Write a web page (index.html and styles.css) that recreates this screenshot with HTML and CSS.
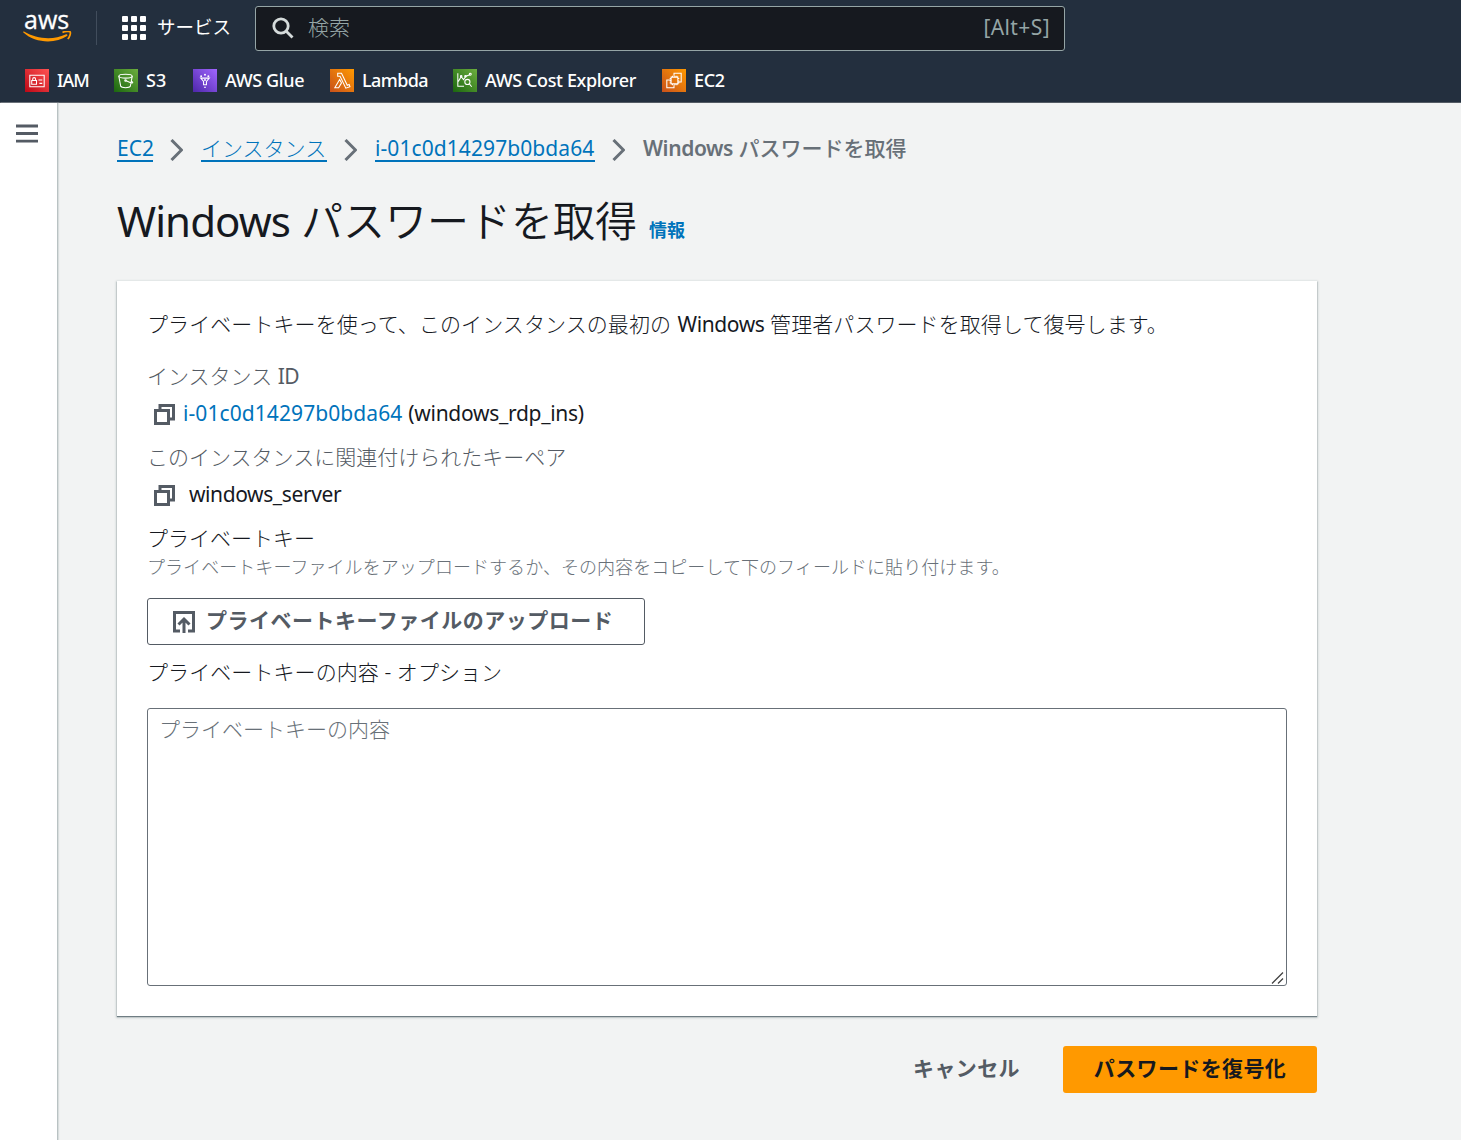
FILE: index.html
```html
<!DOCTYPE html>
<html lang="ja">
<head>
<meta charset="utf-8">
<title>Windows パスワードを取得</title>
<link rel="stylesheet" href="styles.css">
</head>
<body>
<header class="topnav">
  <div class="nav-main">
    <a class="logo" aria-label="aws"><span class="logo-text">aws</span>
      <svg class="smile" width="49" height="12" viewBox="0 0 49 12"><path d="M1 .5C14 8.500 31 9 42.500 3.500C44 2.700 45 4 44 5C33 13 12 12.500 .4 1.600C-.2 .8 .2 .2 1 .5Z" fill="#f90"/><path d="M39.500 1.400C42 .2 46.500 0 47.200 .9C47.800 2 47 5.500 44.800 8" fill="none" stroke="#f90" stroke-width="1.700"/></svg></a>
    <span class="divider"></span>
    <a class="services">
      <svg width="24" height="24" viewBox="0 0 24 24" fill="#fff"><rect width="6" height="6" rx="1"/><rect x="9" width="6" height="6" rx="1"/><rect x="18" width="6" height="6" rx="1"/><rect y="9" width="6" height="6" rx="1"/><rect x="9" y="9" width="6" height="6" rx="1"/><rect x="18" y="9" width="6" height="6" rx="1"/><rect y="18" width="6" height="6" rx="1"/><rect x="9" y="18" width="6" height="6" rx="1"/><rect x="18" y="18" width="6" height="6" rx="1"/></svg>
      <span>サービス</span></a>
    <div class="search">
      <svg width="22" height="22" viewBox="0 0 22 22" fill="none" stroke="#d5dbdb" stroke-width="2.800"><circle cx="9" cy="9" r="7.200"/><path d="M14 14L20.500 20.500"/></svg>
      <span class="search-label">検索</span><span class="shortcut">[Alt+S]</span>
    </div>
  </div>
  <nav class="favorites">
    <a class="fav iam"><svg class="tile red" viewBox="0 0 24 24"><path d="M4.500 6.500h15v12h-15zM6.500 12h5v4h-5zM7.500 12v-1.500a1.500 1.500 0 0 1 3 0V12M13.500 11.500h4M14.500 15h3"/></svg><span>IAM</span></a>
    <a class="fav s3"><svg class="tile green" viewBox="0 0 24 24"><ellipse cx="11.500" cy="7.500" rx="7" ry="2"/><path d="M4.500 7.500L6.500 18c1 2 9 2 10 0l2-10.500M11.500 12l6 2.500c2 .5 2-1 .5-1.500"/><circle cx="11.500" cy="12" r=".8"/></svg><span>S3</span></a>
    <a class="fav glue"><svg class="tile purple" viewBox="0 0 24 24"><path d="M7.500 9.500h9L13.500 13v3.500h-3V13zM11 19h2"/><g fill="#fff" stroke="none"><circle cx="8" cy="7.500" r="1"/><circle cx="12" cy="6" r="1"/><circle cx="15.500" cy="7.500" r="1"/><circle cx="12" cy="11.500" r="1"/></g></svg><span>AWS Glue</span></a>
    <a class="fav lambda"><svg class="tile orange" viewBox="0 0 24 24"><path d="M7.500 4.500h4l6 12.500 2-.8.8 2.300-4.300 1.500L10 7.500H7.500zM9.500 11l2 3.500-3 5H4.500z"/></svg><span>Lambda</span></a>
    <a class="fav cost"><svg class="tile green" viewBox="0 0 24 24"><path d="M4.500 4.500v13.500H11M5 13l3-5 2.500 3 2.500-3.500 4-1.500"/><circle cx="8" cy="7.500" r=".8"/><circle cx="12.500" cy="7.500" r=".8"/><circle cx="17.500" cy="5.500" r="1"/><circle cx="14.500" cy="13.500" r="2.700"/><path d="M16.500 15.500l2.500 3"/></svg><span>AWS Cost Explorer</span></a>
    <a class="fav ec2"><svg class="tile orange" viewBox="0 0 24 24"><path d="M12 7V4.500h7.500v9H17M9 11.500H4.500v8H12V17M9 8.500h7v7H9zM10.500 7v1.500M13 7v1.500M15 7v1.500M10.500 15.500V17M13 15.500V17M15 15.500V17M7.500 10H9M7.500 12.500H9M7.500 14.500H9M16 10h1.500M16 12.500h1.500M16 14.500h1.500"/></svg><span>EC2</span></a>
  </nav>
</header>
<div class="shell">
  <aside class="rail"><svg width="22" height="20" viewBox="0 0 22 20" stroke="#545b64" stroke-width="2.800"><path d="M0 2h22M0 9.500h22M0 17.200h22"/></svg></aside>
  <main class="content">
    <nav class="crumbs">
      <a class="crumb c1">EC2</a>
      <svg class="chev" viewBox="0 0 13 22"><path d="M1.500 1L11.500 11L1.500 21"/></svg>
      <a class="crumb c2">インスタンス</a>
      <svg class="chev" viewBox="0 0 13 22"><path d="M1.500 1L11.500 11L1.500 21"/></svg>
      <a class="crumb c3">i-01c0d14297b0bda64</a>
      <svg class="chev" viewBox="0 0 13 22"><path d="M1.500 1L11.500 11L1.500 21"/></svg>
      <span class="current"><span class="lat">Windows</span> パスワードを取得</span>
    </nav>
    <h1 class="title"><span class="lat">Windows</span> パスワードを取得<a class="info">情報</a></h1>
    <section class="panel">
      <p class="intro">プライベートキーを使って、このインスタンスの最初の <span class="lat">Windows</span> 管理者パスワードを取得して復号します。</p>
      <div class="label first">インスタンス <span class="lat">ID</span></div>
      <div class="value lat"><svg class="copy" viewBox="0 0 21 21"><path d="M1.500 6.500h13v13h-13zM6 6V1.500h13.500V15H15"/></svg><a class="link">i-01c0d14297b0bda64</a><span class="iname">(windows_rdp_ins)</span></div>
      <div class="label">このインスタンスに関連付けられたキーペア</div>
      <div class="value lat"><svg class="copy" viewBox="0 0 21 21"><path d="M1.500 6.500h13v13h-13zM6 6V1.500h13.500V15H15"/></svg><span class="keyname">windows_server</span></div>
      <div class="field">プライベートキー</div>
      <div class="hint">プライベートキーファイルをアップロードするか、その内容をコピーして下のフィールドに貼り付けます。</div>
      <button class="upload"><svg width="22" height="22" viewBox="0 0 22 22"><path d="M7 20H1.500V1.500h19V20H15M11 22V8M5.500 13.500L11 8l5.500 5.500"/></svg><span>プライベートキーファイルのアップロード</span></button>
      <div class="field option">プライベートキーの内容 - オプション</div>
      <div class="keywrap">
        <textarea class="keybox" placeholder="プライベートキーの内容"></textarea>
        <svg class="grip" width="14" height="14" viewBox="0 0 14 14"><path d="M1 12.500L12 1.500M7 12.500L12 7.500"/></svg>
      </div>
    </section>
    <div class="actions"><button class="cancel">キャンセル</button><button class="primary">パスワードを復号化</button></div>
  </main>
</div>
</body>
</html>
```
FILE: styles.css
```css
* { box-sizing: border-box; }
body { margin: 0; height: 1140px; overflow: hidden; background: #f2f3f3; color: #16191f; font: 300 21px/30px "Noto Sans", "Noto Sans CJK JP", sans-serif; }
button, textarea { font: inherit; margin: 0; }
.lat { font-weight: 400; }
svg { display: block; flex: none; }

.topnav { height: 103px; background: #232f3e; border-bottom: 1px solid #545b64; color: #fff; }
.nav-main { display: flex; align-items: center; height: 56px; }
.logo { width: 73px; padding-left: 23px; height: 56px; padding-top: 8px; }
.logo-text { display: block; height: 23px; margin-left: 1px; font: 500 25px/23px "Open Sans", sans-serif; letter-spacing: 0; -webkit-text-stroke: .3px #fff; }
.divider { width: 1px; height: 34px; margin-left: 23px; background: #414d5c; }
.services { display: flex; align-items: center; gap: 11px; margin-left: 25px; width: 133px; font-size: 18.500px; font-weight: 400; }
.services span { position: relative; top: -1px; }
.search { display: flex; align-items: center; width: 810px; height: 45px; padding: 0 14px 2px 16px; border: 1px solid #95a5a6; border-radius: 3px; background: #16191f; color: #95a5a6; }
.search svg { margin-top: 2px; }
.search-label { margin-left: 14px; }
.shortcut { margin-left: auto; font-weight: 400; letter-spacing: .4px; }
.favorites { display: flex; padding-left: 25px; height: 47px; align-items: center; font-size: 18px; font-weight: 500; }
.fav { display: flex; align-items: center; gap: 8px; white-space: nowrap; letter-spacing: -.38px; }
.iam { width: 89px; letter-spacing: -.9px; } .s3 { width: 79px; letter-spacing: 0; } .glue { width: 137px; } .lambda { width: 123px; letter-spacing: -.6px; } .cost { width: 209px; }
.tile { width: 24px; height: 23px; fill: none; stroke: #fff; stroke-width: 1.100; margin-top: 1px; }
.red { background: linear-gradient(45deg, #bd0816, #ff5252); }
.green { background: linear-gradient(45deg, #1b660f, #6cae3e); }
.purple { background: linear-gradient(45deg, #4d27aa, #a166ff); }
.orange { background: linear-gradient(45deg, #c8511b, #f90); }

.shell { display: flex; height: 1037px; }
.rail { width: 58px; padding: 21px 0 0 16px; background: #fff; border-right: 1px solid #b9c2c3; box-shadow: 1px 0 1px #d9dede; }
.content { padding: 31px 0 0 59px; width: 1259px; }
.crumbs { display: flex; align-items: center; height: 30px; }
.crumb { height: 25px; line-height: 23px; color: #0073bb; border-bottom: 2px solid #0073bb; font-weight: 400; white-space: nowrap; }
.c1 { width: 36px; } .c2 { width: 126px; font-weight: 300; } .c3 { width: 220px; letter-spacing: .08px; }
.chev { width: 13px; height: 22px; margin: 2px 18px 0 17px; fill: none; stroke: #687078; stroke-width: 3; }
.current { color: #687078; font-weight: 500; white-space: nowrap; position: relative; top: -1px; }
.current .lat { font-weight: 600; letter-spacing: -.4px; }
.title { margin: 27px 0 0; height: 60px; font-size: 42px; line-height: 60px; font-weight: 350; white-space: nowrap; }
.title .lat { letter-spacing: -.9px; }
.info { margin-left: 12px; font-size: 18px; font-weight: 700; color: #0073bb; }

.panel { height: 735px; margin: 30px 0 0; width: 1200px; padding: 28px 30px; background: #fff; box-shadow: 0 1px 1px #6f7d83, 0 1px 2px 1px #c8cfcf; }
.intro { margin: 0; white-space: nowrap; letter-spacing: .08px; }
.intro .lat { letter-spacing: -.4px; margin-left: 1px; }
.label { color: #545b64; margin-top: 14px; }
.first { margin-top: 22px; }
.first .lat { letter-spacing: -.5px; }
.value { display: flex; align-items: center; margin-top: 7px; }
.copy { width: 21px; height: 21px; margin: 2px 8px 0 7px; fill: none; stroke: #545b64; stroke-width: 3; }
.link { color: #0073bb; letter-spacing: .08px; }
.iname { margin-left: 6px; letter-spacing: -.3px; }
.keyname { margin-left: 6px; letter-spacing: -.4px; }
.field { margin-top: 14px; }
.hint { font-size: 18px; line-height: 28px; color: #687078; white-space: nowrap; letter-spacing: .06px; }
.upload { display: flex; align-items: center; width: 498px; height: 47px; margin-top: 17px; padding: 0 0 0 25px; gap: 11px; background: #fff; border: 1px solid #545b64; border-radius: 3px; color: #545b64; font-weight: 700; letter-spacing: .5px; white-space: nowrap; }
.upload svg { fill: none; stroke: #545b64; stroke-width: 3; margin-top: 1px; }
.upload span { position: relative; top: -2px; }
.option { margin-top: 12px; letter-spacing: .08px; }
.keywrap { position: relative; margin-top: 21px; }
.keybox { display: block; width: 1140px; height: 278px; padding: 5px 11px; border: 1px solid #687078; border-radius: 3px; background: #fff; resize: none; }
.keybox::placeholder { color: #687078; }
.grip { position: absolute; right: 2px; bottom: 1px; fill: none; stroke: #444; stroke-width: 1.300; }
.actions { display: flex; justify-content: flex-end; gap: 13px; margin-top: 30px; width: 1200px; }
.actions button { height: 47px; border: 0; border-radius: 3px; padding: 0 30px 4px; font-weight: 700; letter-spacing: .38px; white-space: nowrap; }
.cancel { color: #545b64; background: none; }
.primary { width: 254px; background: #f90; color: #16191f; }
```
